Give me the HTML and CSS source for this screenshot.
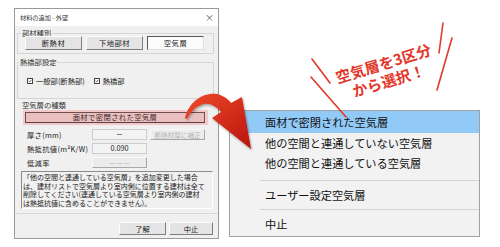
FILE: index.html
```html
<!DOCTYPE html>
<html lang="ja">
<head>
    <meta charset="UTF-8">
    <title>材料の追加 - 外壁</title>
    <link rel="stylesheet" href="styles.css">
</head>
<body>
    <div class="dialog">
        <div class="titlebar">
            <span>材料の追加 - 外壁</span>
            <span class="close">×</span>
        </div>
        <div class="dlg-body">
            <fieldset class="group g1">
                <legend>部材種別</legend>
                <div class="seg">
                    <div class="btn">断熱材</div>
                    <div class="btn">下地部材</div>
                    <div class="btn pressed">空気層</div>
                </div>
            </fieldset>
            <fieldset class="group g2">
                <legend>熱橋部設定</legend>
                <div class="checks">
                    <span class="check"><i class="box"><svg viewBox="0 0 6 6"><path d="M1 3 L2.4 4.4 L5 1.4" fill="none" stroke="#111" stroke-width="1"/></svg></i>一般部(断熱部)</span>
                    <span class="check"><i class="box"><svg viewBox="0 0 6 6"><path d="M1 3 L2.4 4.4 L5 1.4" fill="none" stroke="#111" stroke-width="1"/></svg></i>熱橋部</span>
                </div>
            </fieldset>
            <div class="sec-label">空気層の種類</div>
            <div class="sel-wrap">
                <div class="sel-btn">面材で密閉された空気層</div>
            </div>
            <div class="row">
                <span class="lbl">厚さ(mm)</span>
                <span class="field">－</span>
                <span class="btn small disabled">断熱材厚に補正</span>
            </div>
            <div class="row">
                <span class="lbl">熱抵抗値(m²K/W)</span>
                <span class="field">0.090</span>
            </div>
            <div class="row">
                <span class="lbl">低減率</span>
                <span class="btn field-btn disabled">－－－</span>
            </div>
            <div class="note">「他の空間と連通している空気層」を追加変更した場合<br>は、建材リストで空気層より室内側に位置する建材は全て<br>削除してください(連通している空気層より室内側の建材<br>は熱抵抗値に含めることができません)。</div>
        </div>
        <div class="dlg-foot">
            <div class="btn ok">了解</div>
            <div class="btn cancel">中止</div>
        </div>
    </div>

    <!-- ポップアップメニュー -->
    <div class="menu">
        <div class="item active">面材で密閉された空気層</div>
        <div class="item">他の空間と連通していない空気層</div>
        <div class="item">他の空間と連通している空気層</div>
        <div class="sep sep1"></div>
        <div class="item">ユーザー設定空気層</div>
        <div class="sep sep2"></div>
        <div class="item">中止</div>
    </div>

    <!-- 注釈 -->
    <svg class="notes" width="500" height="247" viewBox="0 0 500 247">
        <defs>
            <linearGradient id="red" x1="0" y1="0" x2="1" y2="1">
                <stop offset="0" stop-color="#f04a2c"/>
                <stop offset="1" stop-color="#b8140c"/>
            </linearGradient>
            <filter id="shadow" x="-20%" y="-20%" width="140%" height="140%">
                <feDropShadow dx="1" dy="1.5" stdDeviation="1" flood-color="#000" flood-opacity="0.35"/>
            </filter>
        </defs>
        <path d="M185 118 C189 101 204 92 217 94 C224 96 228 99 231 103 L242 97 L251 149 L212 118 L221 112 C216 106 210 103 204 104 C196 106 190 112 187 119 Z" fill="url(#red)" filter="url(#shadow)"/>
        <g stroke="#e2382a" stroke-width="1.6" stroke-linecap="round">
            <line x1="312" y1="59" x2="330" y2="83"/>
            <line x1="311" y1="77" x2="346" y2="117"/>
            <line x1="443" y1="23" x2="439" y2="53"/>
            <line x1="452" y1="38" x2="437" y2="90"/>
        </g>
    </svg>
    <div class="callout">空気層を3区分<br>から選択！</div>
</body>
</html>
```

FILE: styles.css
```css
* {
    margin: 0;
    padding: 0;
    box-sizing: border-box;
}

body {
    width: 500px;
    height: 247px;
    padding: 8px 0 0 14px;
    background-color: #fff;
    font-family: "Noto Sans CJK JP", sans-serif;
    color: #1a1a1a;
    position: relative;
    overflow: hidden;
}

/* ダイアログ */
.dialog {
    width: 205px;
    border: 1px solid #9a9a9a;
    background-color: #f0f0f0;
    font-size: 7.3px;
    line-height: 8px;
}

.titlebar {
    height: 17px;
    background-color: #fff;
    display: flex;
    align-items: center;
    justify-content: space-between;
    padding: 0 4px 0 5px;
    font-size: 6.2px;
    color: #333;
}

.close {
    font-size: 9px;
    color: #555;
}

.dlg-body {
    padding: 3px 4px 4px 2px;
}

.group {
    width: 197px;
    border: 1px solid #d5d5d5;
    padding: 0 3px 3px;
}

.group legend {
    line-height: 8px;
    padding: 0 1px;
    color: #333;
}

.g2 {
    margin-top: 4px;
    padding-bottom: 13px;
}

.g2 legend {
    margin-left: -2px;
}

.seg {
    display: flex;
    gap: 4px;
    margin: -1px 0 0 4px;
}

.btn {
    height: 14px;
    display: flex;
    align-items: center;
    justify-content: center;
    background-color: #e4e4e4;
    border: 1px solid;
    border-color: #fbfbfb #7e7e7e #7e7e7e #fbfbfb;
    color: #1a1a1a;
    white-space: nowrap;
}

.seg .btn {
    width: 57px;
    letter-spacing: 0.5px;
}

.btn.pressed {
    background-color: #fbfbfb;
    border-color: #5a5a5a #e0e0e0 #e0e0e0 #5a5a5a;
}

.checks {
    display: flex;
    gap: 9px;
    margin: 11px 0 0 6px;
}

.check {
    display: inline-flex;
    align-items: center;
    gap: 3px;
}

.box {
    width: 6px;
    height: 6px;
    background-color: #fff;
    border: 1px solid #444;
    display: block;
}

.box svg {
    display: block;
    width: 4px;
    height: 4px;
}

.sec-label {
    margin: 2px 0 0 5px;
    color: #333;
}

.sel-wrap {
    width: 185px;
    height: 15px;
    margin: 1px 0 0 6px;
    padding: 2px 3px 2px 2px;
    background-color: #f2c8c8;
}

.sel-btn {
    height: 11px;
    background-color: #e9bfbf;
    border: 1px solid;
    border-color: #6e5050 #6e5050 #5a4040 #6e5050;
    color: #3c2626;
    text-align: center;
    line-height: 9px;
    letter-spacing: 0.4px;
}

.row {
    display: flex;
    align-items: center;
    height: 11px;
    margin-top: 3px;
    padding-left: 10px;
}

.sel-wrap + .row {
    margin-top: 4px;
}

.lbl {
    width: 65px;
    letter-spacing: 0.3px;
}

.field {
    width: 55px;
    height: 11px;
    border: 1px solid #cdcdcd;
    background-color: #f3f3f3;
    text-align: center;
    line-height: 9px;
    margin-right: 3px;
}

.btn.small {
    width: 55px;
    height: 11px;
    font-size: 6.6px;
}

.btn.field-btn {
    width: 55px;
    height: 11px;
}

.btn.disabled {
    color: #b4b4b4;
    background-color: #ececec;
    border-color: #f8f8f8 #a8a8a8 #a8a8a8 #f8f8f8;
}

.note {
    width: 192px;
    height: 38px;
    margin: 3px 0 0 4px;
    padding: 1px 0 0 1px;
    border: 1px solid;
    border-color: #8c8c8c #fff #fff #8c8c8c;
    font-size: 7px;
    line-height: 8.5px;
    white-space: nowrap;
    overflow: hidden;
}

.dlg-foot {
    border-top: 1px solid #d8d8d8;
    display: flex;
    justify-content: flex-end;
    gap: 3px;
    padding: 8px 5px 3px;
}

.dlg-foot .btn {
    height: 13px;
}

.btn.ok {
    width: 47px;
}

.btn.cancel {
    width: 44px;
}

/* メニュー */
.menu {
    position: absolute;
    left: 229px;
    top: 110px;
    width: 251px;
    height: 127px;
    background-color: #f2f2f2;
    border: 1px solid #a0a0a0;
    font-size: 11.2px;
    color: #111;
}

.item {
    height: 20px;
    line-height: 20px;
    margin-left: 3px;
    padding-left: 32px;
    white-space: nowrap;
}

.item.active {
    height: 22px;
    line-height: 22px;
    background-color: #91c9f7;
}

.sep {
    height: 1px;
    margin-left: 30px;
    background-color: #d4d4d4;
}

.sep1 {
    margin-top: 7px;
    margin-bottom: 4px;
}

.sep2 {
    margin-top: 4px;
    margin-bottom: 4px;
}

/* 注釈 */
.notes {
    position: absolute;
    left: 0;
    top: 0;
    pointer-events: none;
}

.callout {
    position: absolute;
    left: 326px;
    top: 54px;
    width: 120px;
    text-align: center;
    font-size: 15px;
    line-height: 18px;
    font-weight: bold;
    color: #e2382a;
    transform: rotate(-17deg);
    white-space: nowrap;
}
```
